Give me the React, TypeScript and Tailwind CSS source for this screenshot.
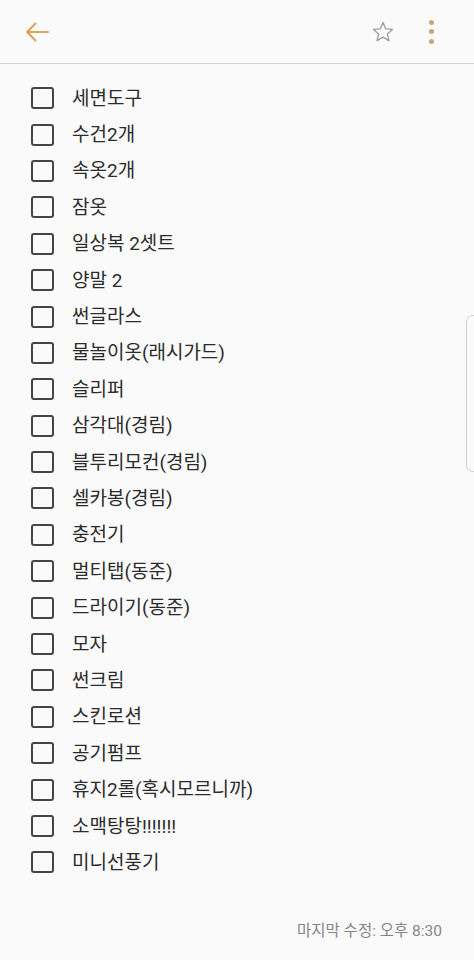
const items = [
  "세면도구",
  "수건2개",
  "속옷2개",
  "잠옷",
  "일상복 2셋트",
  "양말 2",
  "썬글라스",
  "물놀이옷(래시가드)",
  "슬리퍼",
  "삼각대(경림)",
  "블투리모컨(경림)",
  "셀카봉(경림)",
  "충전기",
  "멀티탭(동준)",
  "드라이기(동준)",
  "모자",
  "썬크림",
  "스킨로션",
  "공기펌프",
  "휴지2롤(혹시모르니까)",
  "소맥탕탕!!!!!!!",
  "미니선풍기",
];

const font = {
  fontFamily: 'Roboto, "Noto Sans CJK KR", sans-serif',
};

const ChecklistRow = ({ label }: { label: string }) => (
  <div className="flex h-[36.4px] items-center">
    <div className="ml-[31px] h-[22px] w-[23px] shrink-0 rounded-[3px] border-2 border-[#454545]" />
    <span className="ml-[18px] text-[19px] leading-none text-[#2b2b2b]">
      {label}
    </span>
  </div>
);

export default function App() {
  return (
    <div
      className="relative flex h-[960px] w-[474px] flex-col overflow-hidden bg-[#fafafa]"
      style={font}
    >
      {/* toolbar */}
      <div className="flex h-[64px] shrink-0 items-center border-b border-[#d4d4d4] pl-[25px] pr-[40px]">
        <svg width="24" height="20" viewBox="0 0 24 20" fill="none">
          <path
            d="M23 10H2M10.5 1.5L2 10l8.5 8.5"
            stroke="#dea352"
            strokeWidth="2"
            strokeLinecap="round"
            strokeLinejoin="round"
          />
        </svg>
        <div className="flex-1" />
        <svg width="24" height="24" viewBox="0 0 24 24" fill="none">
          <path
            d="M12 2.5l2.7 6.3 6.8.6-5.2 4.5 1.6 6.7L12 17.1l-5.9 3.5 1.6-6.7-5.2-4.5 6.8-.6z"
            stroke="#9c9c9c"
            strokeWidth="1.3"
            strokeLinejoin="round"
          />
        </svg>
        <div className="ml-[34px] flex flex-col items-center gap-[4.5px]">
          <span className="h-[5px] w-[5px] rounded-full bg-[#c9a571]" />
          <span className="h-[5px] w-[5px] rounded-full bg-[#c9a571]" />
          <span className="h-[5px] w-[5px] rounded-full bg-[#c9a571]" />
        </div>
      </div>

      {/* list */}
      <div className="flex flex-col pt-[16px]">
        {items.map((item, index) => (
          <ChecklistRow key={index} label={item} />
        ))}
      </div>

      <div className="flex-1" />

      {/* footer */}
      <div className="flex justify-end pb-[21px] pr-[32px]">
        <span className="text-[15.5px] leading-none text-[#858585]">
          마지막 수정: 오후 8:30
        </span>
      </div>

      {/* scroll handle */}
      <div className="absolute left-[466px] top-[315px] h-[157px] w-[20px] rounded-l-[7px] border border-[#d0d0d0] bg-[#fafafa]" />
    </div>
  );
}
